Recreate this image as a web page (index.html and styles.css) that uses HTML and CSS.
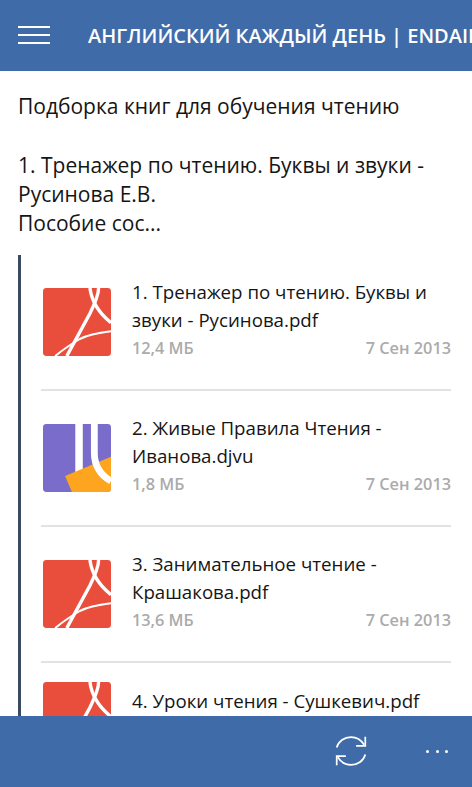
FILE: index.html
```html
<!DOCTYPE html>
<html lang="ru">
<head>
<meta charset="utf-8">
<title>Английский каждый день</title>
<link rel="stylesheet" href="styles.css">
</head>
<body>
<svg class="defs" width="0" height="0" aria-hidden="true">
  <defs>
    <symbol id="pdf" viewBox="0 0 200 200">
      <rect width="200" height="200" rx="10" fill="#e94e3d"/>
      <g fill="none" stroke="#fff" stroke-width="10">
        <path d="M138 0C142 30 160 70 200 102"/>
        <path d="M163 0C165 15 155 40 138 75L70 200"/>
        <path d="M200 127C165 131 130 138 108 150C80 167 60 180 36 200" stroke-width="6"/>
      </g>
    </symbol>
    <symbol id="djvu" viewBox="0 0 200 200">
      <rect width="200" height="200" rx="10" fill="#7a6cca"/>
      <path d="M106 0V150" fill="none" stroke="#fff" stroke-width="22"/>
      <path d="M65 153L200 96V190a10 10 0 0 1-10 10H85Z" fill="#fea51f"/>
      <path d="M151 0V85C151 125 170 150 200 168" fill="none" stroke="#fff" stroke-width="20"/>
    </symbol>
  </defs>
</svg>
<div class="app">
  <header class="topbar">
    <div class="burger"><i></i><i></i><i></i></div>
    <h1 class="title">АНГЛИЙСКИЙ КАЖДЫЙ ДЕНЬ | ENDAILY.RU</h1>
  </header>
  <main class="content">
    <p class="intro">Подборка книг для обучения чтению<br><br>1. Тренажер по чтению. Буквы и звуки - Русинова Е.В.<br>Пособие сос...</p>
    <section class="files">
      <article class="file">
        <svg class="icon"><use href="#pdf"/></svg>
        <div class="info">
          <div class="name">1. Тренажер по чтению. Буквы и звуки - Русинова.pdf</div>
          <div class="meta"><span>12,4 МБ</span><span>7 Сен 2013</span></div>
        </div>
      </article>
      <article class="file">
        <svg class="icon"><use href="#djvu"/></svg>
        <div class="info">
          <div class="name">2. Живые Правила Чтения - Иванова.djvu</div>
          <div class="meta"><span>1,8 МБ</span><span>7 Сен 2013</span></div>
        </div>
      </article>
      <article class="file">
        <svg class="icon"><use href="#pdf"/></svg>
        <div class="info">
          <div class="name">3. Занимательное чтение - Крашакова.pdf</div>
          <div class="meta"><span>13,6 МБ</span><span>7 Сен 2013</span></div>
        </div>
      </article>
      <article class="file file-last">
        <svg class="icon"><use href="#pdf"/></svg>
        <div class="info">
          <div class="name">4. Уроки чтения - Сушкевич.pdf</div>
        </div>
      </article>
    </section>
  </main>
  <footer class="appbar">
    <svg class="sync" viewBox="2 2 28 28" fill="none" stroke="#fff" stroke-width="1.5">
      <path d="M3.500 13C5 7.500 10 3.800 16 3.800C21 3.800 25 6.500 27.500 10.500"/>
      <path d="M28.500 3.500V11.500H20.500"/>
      <path d="M28.500 19C27 24.500 22 28.200 16 28.200C11 28.200 7 25.500 4.500 21.500"/>
      <path d="M3.500 28.500V20.500H11.500"/>
    </svg>
    <div class="more"><i></i><i></i><i></i></div>
  </footer>
</div>
</body>
</html>
```
FILE: styles.css
```css
* { box-sizing: border-box; }
html, body { margin: 0; height: 100%; }
body {
  font-family: "Open Sans", "Noto Sans", sans-serif;
  color: #151515;
  background: #fff;
  overflow: hidden;
}
.defs { display: block; height: 0; }
.app {
  width: 472px;
  height: 787px;
  display: flex;
  flex-direction: column;
  overflow: hidden;
}
.topbar {
  flex: 0 0 71px;
  background: #3f6ca8;
  display: flex;
  align-items: center;
  padding: 0 0 0 18px;
  gap: 38px;
  overflow: hidden;
}
.burger {
  flex: 0 0 32px;
  display: flex;
  flex-direction: column;
  gap: 6px;
  margin-top: -1px;
}
.burger i { display: block; height: 2px; background: #fff; }
.title {
  margin: 0;
  font-size: 20px;
  font-weight: 600;
  color: #fff;
  white-space: nowrap;
}
.content {
  flex: 1 1 0;
  min-height: 0;
  overflow: hidden;
  padding: 21px 21px 0 18px;
}
.intro {
  margin: 0;
  font-size: 21px;
  line-height: 29.3px;
}
.files {
  margin-top: 17px;
  border-left: 3px solid #3a4a60;
  padding-left: 20px;
  height: 480px;
}
.file {
  display: flex;
  align-items: flex-start;
  gap: 21px;
  height: 136px;
  padding: 33px 0 0 2px;
  border-bottom: 2px solid #e2e2e2;
}
.file-last { border-bottom: 0; padding-top: 19px; }
.icon { flex: 0 0 68px; width: 68px; height: 68px; }
.info { flex: 1 1 0; min-width: 0; margin-top: -10px; }
.name { font-size: 18.700px; line-height: 28px; }
.meta {
  display: flex;
  justify-content: space-between;
  font-size: 16.300px;
  line-height: 28px;
  color: #ababab;
  font-weight: 600;
}
.file-last .info { margin-top: 5px; }
.appbar {
  flex: 0 0 71px;
  background: #3f6ca8;
  display: flex;
  align-items: center;
  justify-content: flex-end;
  padding: 0 24px 1px 0;
  gap: 59px;
}
.sync { width: 32px; height: 32px; display: block; }
.more { display: flex; gap: 6.500px; }
.more i { display: block; width: 3px; height: 3px; border-radius: 50%; background: #fff; }
```
